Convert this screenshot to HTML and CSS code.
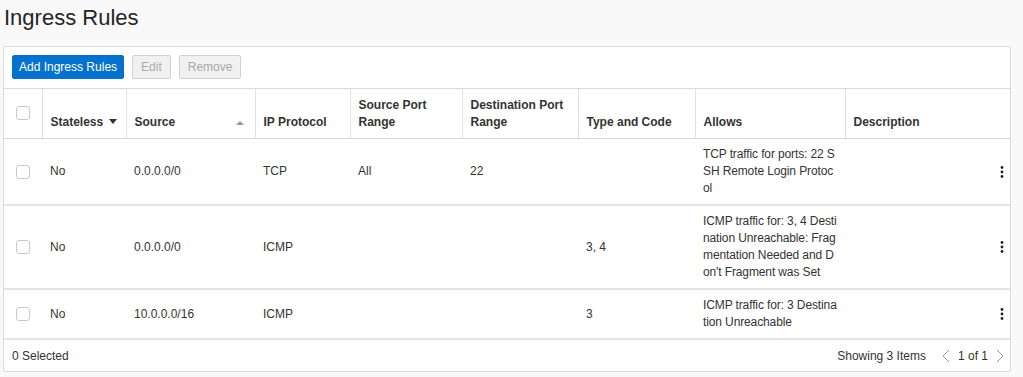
FILE: index.html
```html
<!DOCTYPE html>
<html lang="en">
<head>
    <meta charset="UTF-8">
    <title>Ingress Rules</title>
    <link rel="stylesheet" href="styles.css">
</head>
<body>
    <div class="page">
        <h1>Ingress Rules</h1>
        <div class="panel">
            <div class="toolbar">
                <button type="button" class="btn btn-primary">Add Ingress Rules</button>
                <button type="button" class="btn" disabled>Edit</button>
                <button type="button" class="btn" disabled>Remove</button>
            </div>
            <table class="rules">
                <colgroup>
                    <col style="width: 38px">
                    <col style="width: 84px">
                    <col style="width: 129px">
                    <col style="width: 95px">
                    <col style="width: 112px">
                    <col style="width: 116px">
                    <col style="width: 117px">
                    <col style="width: 150px">
                    <col>
                </colgroup>
                <thead>
                    <tr>
                        <th class="check"><span class="box"></span></th>
                        <th>Stateless <span class="sort-down"></span></th>
                        <th><div class="th-flex">Source <span class="sort-up"></span></div></th>
                        <th>IP Protocol</th>
                        <th>Source Port<br>Range</th>
                        <th>Destination Port<br>Range</th>
                        <th>Type and Code</th>
                        <th>Allows</th>
                        <th>Description</th>
                    </tr>
                </thead>
                <tbody>
                    <tr>
                        <td class="check"><span class="box"></span></td>
                        <td>No</td>
                        <td>0.0.0.0/0</td>
                        <td>TCP</td>
                        <td>All</td>
                        <td>22</td>
                        <td></td>
                        <td class="allows">TCP traffic for ports: 22 SSH Remote Login Protocol</td>
                        <td class="actions"><span class="kebab"><svg width="4" height="12" viewBox="0 0 4 12"><circle cx="2" cy="1.5" r="1.4"/><circle cx="2" cy="6" r="1.4"/><circle cx="2" cy="10.5" r="1.4"/></svg></span></td>
                    </tr>
                    <tr>
                        <td class="check"><span class="box"></span></td>
                        <td>No</td>
                        <td>0.0.0.0/0</td>
                        <td>ICMP</td>
                        <td></td>
                        <td></td>
                        <td>3, 4</td>
                        <td class="allows">ICMP traffic for: 3, 4 Destination Unreachable: Fragmentation Needed and Don't Fragment was Set</td>
                        <td class="actions"><span class="kebab"><svg width="4" height="12" viewBox="0 0 4 12"><circle cx="2" cy="1.5" r="1.4"/><circle cx="2" cy="6" r="1.4"/><circle cx="2" cy="10.5" r="1.4"/></svg></span></td>
                    </tr>
                    <tr>
                        <td class="check"><span class="box"></span></td>
                        <td>No</td>
                        <td>10.0.0.0/16</td>
                        <td>ICMP</td>
                        <td></td>
                        <td></td>
                        <td>3</td>
                        <td class="allows">ICMP traffic for: 3 Destination Unreachable</td>
                        <td class="actions"><span class="kebab"><svg width="4" height="12" viewBox="0 0 4 12"><circle cx="2" cy="1.5" r="1.4"/><circle cx="2" cy="6" r="1.4"/><circle cx="2" cy="10.5" r="1.4"/></svg></span></td>
                    </tr>
                </tbody>
            </table>
            <div class="footer">
                <span>0 Selected</span>
                <div class="pager">
                    <span class="count">Showing 3 Items</span>
                    <svg class="chev" width="8" height="14" viewBox="0 0 8 14"><path d="M7 1 L1 7 L7 13"/></svg>
                    <span>1 of 1</span>
                    <svg class="chev" width="8" height="14" viewBox="0 0 8 14"><path d="M1 1 L7 7 L1 13"/></svg>
                </div>
            </div>
        </div>
    </div>
</body>
</html>
```

FILE: styles.css
```css
body {
    margin: 0;
    background-color: #f9f9f9;
    font-family: "Liberation Sans", Arial, sans-serif;
    color: #333;
}
.page {
    width: 1008px;
    padding: 0 0 0 3px;
}
h1 {
    font-size: 22px;
    font-weight: normal;
    color: #252525;
    margin: 0;
    padding: 5px 0 0 1px;
    height: 46px;
    box-sizing: border-box;
}
.panel {
    background-color: #fff;
    border: 1px solid #d9d9d9;
    border-radius: 2px;
}
.toolbar {
    display: flex;
    gap: 8px;
    padding: 8px 8px 9px 8px;
}
.btn {
    height: 24px;
    padding: 0 8px;
    font-family: inherit;
    font-size: 12px;
    border-radius: 2px;
    border: 1px solid #d2d2d2;
    background-color: #f1f1f1;
    color: #a9a9a9;
}
.btn-primary {
    padding: 0 6px;
    background-color: #0572ce;
    border-color: #0572ce;
    color: #fff;
}
.rules {
    width: 100%;
    border-collapse: collapse;
    table-layout: fixed;
    font-size: 12px;
}
.rules th {
    text-align: left;
    vertical-align: bottom;
    font-weight: bold;
    color: #333;
    height: 50px;
    padding: 0 8px 7px;
    line-height: 17px;
    border-top: 1px solid #dadada;
    border-bottom: 1px solid #d6d6d6;
    border-left: 1px solid #e1e1e1;
    box-sizing: border-box;
}
.rules th:first-child {
    border-left: none;
}
.rules td {
    padding: 7px 8px;
    line-height: 17px;
    vertical-align: middle;
    border-bottom: 2px solid #e4e4e4;
    color: #333;
}
.rules th.check {
    vertical-align: top;
    padding: 17px 0 0 12px;
}
.rules td.check {
    padding-left: 12px;
    padding-right: 0;
}
.box {
    display: block;
    width: 12px;
    height: 12px;
    border: 1px solid #c8c8c8;
    border-radius: 3px;
    background-color: #fff;
}
.th-flex {
    display: flex;
    justify-content: space-between;
    align-items: center;
}
.sort-down {
    display: inline-block;
    width: 0;
    height: 0;
    border-left: 4px solid transparent;
    border-right: 4px solid transparent;
    border-top: 5px solid #333;
    vertical-align: 2px;
    margin-left: 2px;
}
.sort-up {
    display: inline-block;
    width: 0;
    height: 0;
    border-left: 4px solid transparent;
    border-right: 4px solid transparent;
    border-bottom: 4px solid #999;
    margin-right: 3px;
}
.allows {
    word-break: break-all;
    letter-spacing: -0.12px;
    padding-right: 5px;
}
.rules td.actions {
    text-align: right;
    padding-right: 6px;
}
.kebab {
    display: inline-block;
    vertical-align: middle;
}
.kebab svg {
    display: block;
    fill: #222;
}
.footer {
    display: flex;
    justify-content: space-between;
    align-items: center;
    height: 31px;
    padding: 0 6px 0 8px;
    font-size: 12px;
    color: #333;
}
.pager {
    display: flex;
    align-items: center;
    gap: 8px;
}
.pager .count {
    margin-right: 8px;
}
.chev {
    fill: none;
    stroke: #999;
    stroke-width: 1;
}
```
